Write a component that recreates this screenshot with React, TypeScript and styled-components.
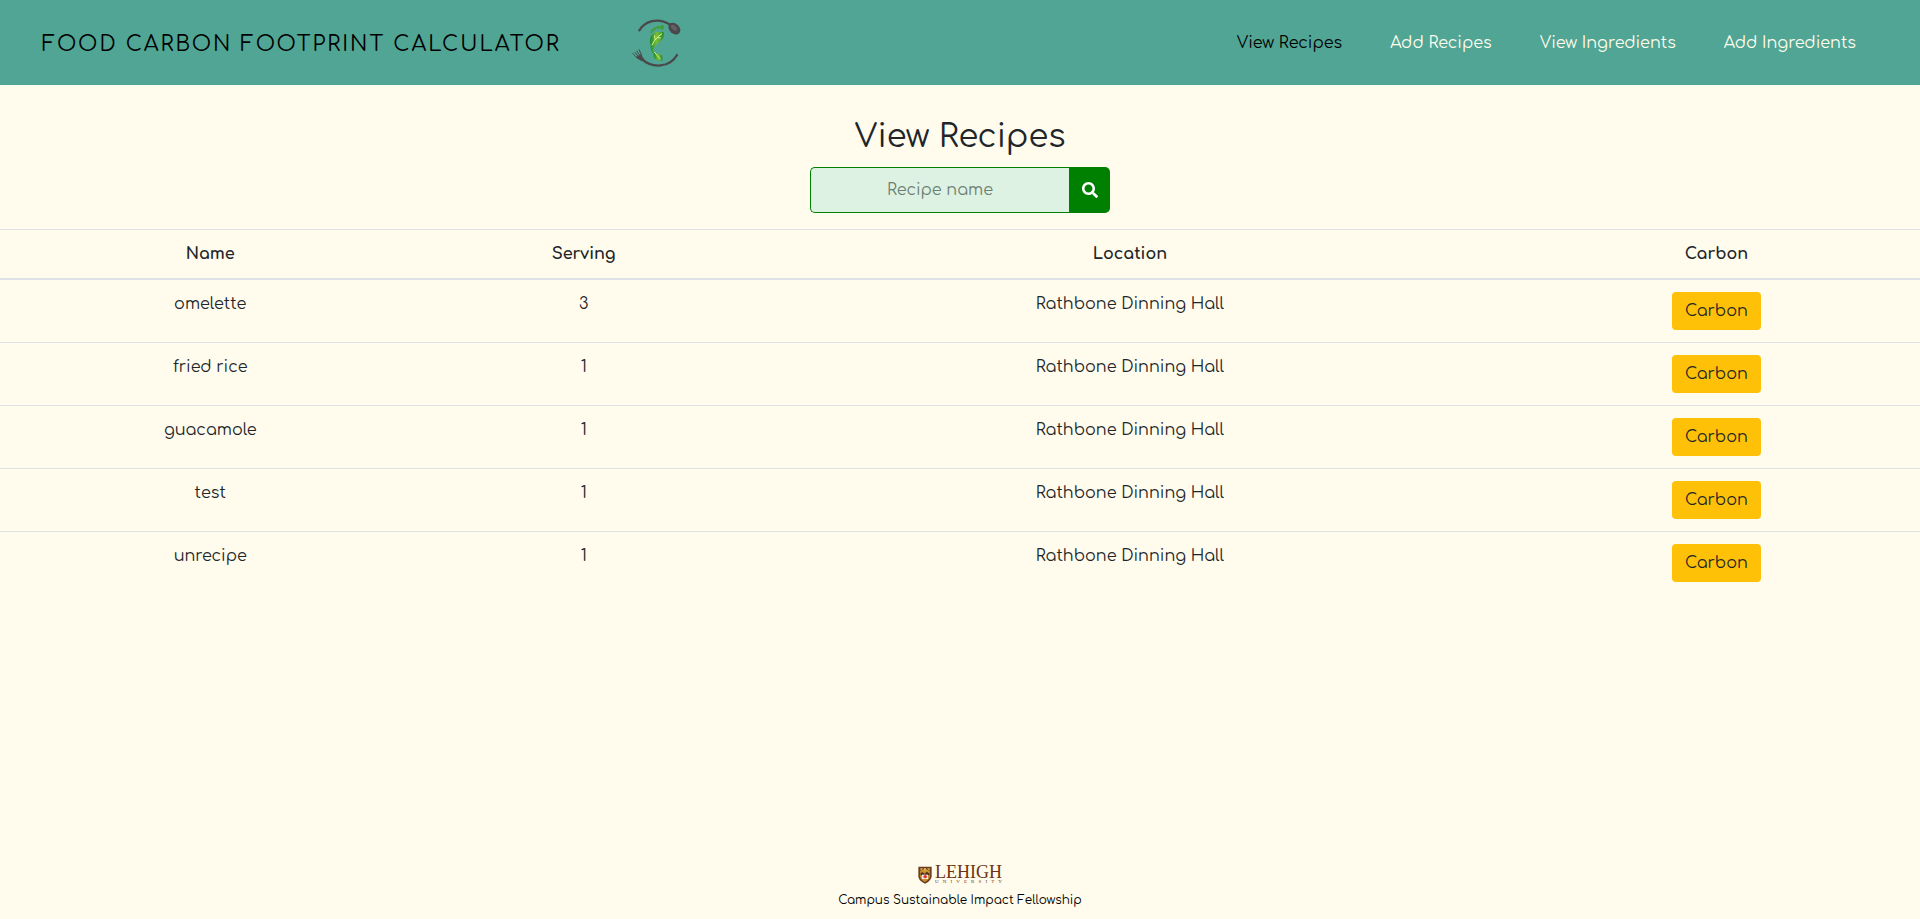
import React, { useState } from "react";
import styled, { createGlobalStyle } from "styled-components";
import { FaSearch } from "react-icons/fa";

const GlobalStyle = createGlobalStyle`
  *, *::before, *::after { box-sizing: border-box; }
  body {
    margin: 0;
    background: #fffced;
    color: #212529;
    font-family: Comfortaa, Inter, sans-serif;
    font-size: 16px;
    line-height: 24px;
  }
`;

const Page = styled.div`
  display: flex;
  flex-direction: column;
  min-height: 100vh;
`;

const Header = styled.header`
  display: flex;
  align-items: center;
  justify-content: space-between;
  padding: 18px 64px 17px 42px;
  background: #50a594;
`;

const Brand = styled.a`
  display: flex;
  align-items: center;
  gap: 71px;
  color: #000;
  font-size: 21px;
  line-height: 28px;
  letter-spacing: 2px;
  text-decoration: none;
  text-transform: uppercase;
`;

const BrandName = styled.span`
  padding-top: 2px;
`;

const Nav = styled.nav`
  display: flex;
  gap: 48px;
`;

const NavLink = styled.a<{ $active?: boolean }>`
  color: ${({ $active }) => ($active ? "#000" : "#fffced")};
  text-decoration: none;
`;

const Main = styled.main`
  flex: 1;
`;

const Title = styled.h1`
  margin: 32px 0 10px;
  font-size: 32px;
  font-weight: 400;
  line-height: 40px;
  text-align: center;
`;

const SearchForm = styled.form`
  display: flex;
  width: 300px;
  height: 46px;
  margin: 0 auto 16px;
`;

const SearchInput = styled.input`
  flex: 1;
  min-width: 0;
  padding: 0 8px;
  border: 1px solid #008000;
  border-right: 0;
  border-radius: 5px 0 0 5px;
  background: #def2e3;
  color: #212529;
  font: inherit;
  text-align: center;
  &::placeholder { color: #6c7f73; opacity: 1; }
`;

const SearchButton = styled.button`
  display: flex;
  align-items: center;
  justify-content: center;
  width: 41px;
  padding: 0;
  border: 0;
  border-radius: 0 5px 5px 0;
  background: #008000;
  color: #fff;
  font-size: 16px;
  cursor: pointer;
`;

const Table = styled.table`
  width: 100%;
  border-spacing: 0;
  table-layout: fixed;
  text-align: center;
`;

const Column = styled.col<{ $width: string }>`
  width: ${({ $width }) => $width};
`;

const HeadCell = styled.th`
  padding: 12px;
  border-top: 1px solid #dee2e6;
  border-bottom: 2px solid #dee2e6;
  font-weight: 700;
`;

const Cell = styled.td`
  padding: 12px;
  vertical-align: top;
  tr + tr > & { border-top: 1px solid #dee2e6; }
`;

const CarbonButton = styled.button`
  display: block;
  height: 38px;
  margin: 0 auto;
  padding: 0 13px;
  border: 0;
  border-radius: 4px;
  background: #ffc107;
  color: #212529;
  font: inherit;
  cursor: pointer;
`;

const Footer = styled.footer`
  display: flex;
  flex-direction: column;
  align-items: center;
  gap: 7px;
  padding-bottom: 10px;
  color: #000;
  font-size: 12px;
  line-height: 18px;
`;

const University = styled.div`
  display: flex;
  align-items: center;
  gap: 3px;
  color: #6b3410;
  font-family: "Liberation Serif", serif;
`;

const Wordmark = styled.div`
  display: flex;
  flex-direction: column;
`;

const WordmarkName = styled.span`
  font-size: 18px;
  line-height: 13px;
`;

const WordmarkKind = styled.span`
  display: flex;
  justify-content: space-between;
  font-size: 5px;
  line-height: 5px;
`;

const recipes = [
  { name: "omelette", serving: 3 },
  { name: "fried rice", serving: 1 },
  { name: "guacamole", serving: 1 },
  { name: "test", serving: 1 },
  { name: "unrecipe", serving: 1 },
];

const FootprintLogo = () => (
  <svg width="50" height="50" viewBox="36 24 150 150" aria-hidden="true">
    <defs>
      <linearGradient id="leaf" x1="0" x2="1">
        <stop offset="0" stopColor="#168a2b" />
        <stop offset="0.5" stopColor="#7cc032" />
        <stop offset="1" stopColor="#238a2c" />
      </linearGradient>
    </defs>
    <g fill="none" stroke="#4b484b" strokeWidth="7" strokeLinecap="round">
      <path d="M58 61C75 33 113 21 151 44" />
      <path d="M64 146C96 176 149 174 171 135" />
    </g>
    <ellipse cx="163" cy="56" rx="20" ry="15" fill="#4b484b" transform="rotate(43 163 56)" />
    <ellipse cx="162" cy="53" rx="11" ry="6" fill="#656065" transform="rotate(43 162 53)" />
    <g fill="none" stroke="#4b484b" strokeWidth="3">
      <path d="M38 130L52 145M44 126L57 142M50 122L61 139M57 118L65 136" />
    </g>
    <path d="M48 141L64 132C66 138 68 143 73 147L65 154C60 149 53 149 48 141Z" fill="#4b484b" />
    <g fill="#3f9f31">
      <ellipse cx="126" cy="52" rx="6" ry="8" />
      <circle cx="114" cy="52" r="5" />
      <circle cx="105" cy="56" r="4" />
      <circle cx="98" cy="61" r="4" />
      <circle cx="94" cy="67" r="3" />
    </g>
    <path d="M92 107C84 74 101 63 131 66C136 93 114 93 104 110C98 120 99 127 103 135C95 127 91 117 92 107Z" fill="url(#leaf)" />
    <path d="M101 122C105 131 113 129 121 133C130 139 127 147 127 152C113 153 103 149 101 139Z" fill="url(#leaf)" />
    <path d="M96 106C102 91 112 80 126 71M105 89L104 76M112 83L122 84M103 126C109 133 115 141 122 148" fill="none" stroke="#dff0a0" strokeWidth="3" />
  </svg>
);

const Shield = () => (
  <svg width="14" height="18" viewBox="0 0 39 54" preserveAspectRatio="none" aria-hidden="true">
    <path d="M1 2H38V31C37 42 28 49 20 53C9 48 2 42 1 31Z" fill="#6b3c1f" />
    <path d="M6 15L19 7L33 15V31C32 40 25 45 19 48C12 44 6 39 6 31Z" fill="#c9932c" />
    <path d="M6 7H14L8 14ZM25 7H33L32 14ZM17 6H22V14H17Z" fill="#e0b04c" />
    <path d="M6 24L12 18L18 23L25 17L33 24L30 28H9Z" fill="#4f301f" />
    <path d="M11 26H28V39H11Z" fill="#f6e9df" />
    <circle cx="20" cy="32" r="5" fill="#df3038" />
  </svg>
);

export default function App() {
  const [query, setQuery] = useState("");
  const shown = recipes.filter((recipe) => recipe.name.includes(query.toLowerCase()));

  return (
    <Page>
      <GlobalStyle />
      <Header>
        <Brand href="#home">
          <BrandName>Food Carbon Footprint Calculator</BrandName>
          <FootprintLogo />
        </Brand>
        <Nav>
          <NavLink href="#view-recipes" $active aria-current="page">View Recipes</NavLink>
          <NavLink href="#add-recipes">Add Recipes</NavLink>
          <NavLink href="#view-ingredients">View Ingredients</NavLink>
          <NavLink href="#add-ingredients">Add Ingredients</NavLink>
        </Nav>
      </Header>
      <Main>
        <Title>View Recipes</Title>
        <SearchForm role="search" onSubmit={(event) => event.preventDefault()}>
          <SearchInput
            aria-label="Recipe name"
            placeholder="Recipe name"
            value={query}
            onChange={(event) => setQuery(event.target.value)}
          />
          <SearchButton type="submit" aria-label="Search"><FaSearch /></SearchButton>
        </SearchForm>
        <Table>
          <colgroup>
            <Column $width="21.9%" />
            <Column $width="17%" />
            <Column $width="39.9%" />
            <Column $width="21.2%" />
          </colgroup>
          <thead>
            <tr>
              <HeadCell scope="col">Name</HeadCell>
              <HeadCell scope="col">Serving</HeadCell>
              <HeadCell scope="col">Location</HeadCell>
              <HeadCell scope="col">Carbon</HeadCell>
            </tr>
          </thead>
          <tbody>
            {shown.map((recipe) => (
              <tr key={recipe.name}>
                <Cell>{recipe.name}</Cell>
                <Cell>{recipe.serving}</Cell>
                <Cell>Rathbone Dinning Hall</Cell>
                <Cell><CarbonButton type="button">Carbon</CarbonButton></Cell>
              </tr>
            ))}
          </tbody>
        </Table>
      </Main>
      <Footer>
        <University>
          <Shield />
          <Wordmark>
            <WordmarkName>LEHIGH</WordmarkName>
            <WordmarkKind aria-label="University">
              {"UNIVERSITY".split("").map((letter, index) => <span key={index}>{letter}</span>)}
            </WordmarkKind>
          </Wordmark>
        </University>
        <span>Campus Sustainable Impact Fellowship</span>
      </Footer>
    </Page>
  );
}
